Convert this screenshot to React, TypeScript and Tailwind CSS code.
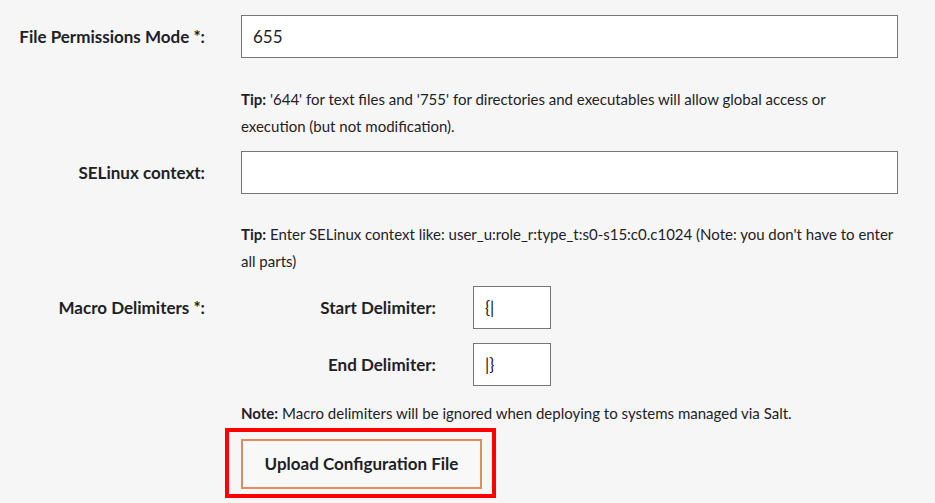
export default function App() {
  return (
    <div className="min-h-screen bg-[#f6f6f6] pt-[15px] pr-[37px] text-[#1e2125] font-['Lato','Liberation_Sans',sans-serif]">
      {/* permissions */}
      <div className="grid grid-cols-[205px_1fr] gap-x-[36px]">
        <label className="flex h-[43px] items-center justify-end text-[17px] font-bold">
          File Permissions Mode *:
        </label>
        <div>
          <input
            defaultValue="655"
            className="block h-[43px] w-full border border-[#777] bg-white px-[11px] text-[17px] outline-none"
          />
          <p className="mt-[28px] text-[15px] leading-[27px]">
            <strong>Tip:</strong> '644' for text files and '755' for directories and executables will allow global access or
            <br />
            execution (but not modification).
          </p>
        </div>
      </div>

      {/* selinux */}
      <div className="mt-[11px] grid grid-cols-[205px_1fr] gap-x-[36px]">
        <label className="flex h-[43px] items-center justify-end text-[17px] font-bold">SELinux context:</label>
        <div>
          <input className="block h-[43px] w-full border border-[#777] bg-white px-[11px] text-[17px] outline-none" />
          <p className="mt-[27px] text-[15px] leading-[27px]">
            <strong>Tip:</strong> Enter SELinux context like: user_u:role_r:type_t:s0-s15:c0.c1024 (Note: you don't have to enter all
            parts)
          </p>
        </div>
      </div>

      {/* macro delimiters */}
      <div className="mt-[11px] grid grid-cols-[205px_1fr] gap-x-[36px]">
        <label className="flex h-[43px] items-center justify-end text-[17px] font-bold">Macro Delimiters *:</label>
        <div>
          <div className="grid grid-cols-[195px_78px] gap-x-[37px] gap-y-[14px]">
            <label className="flex h-[43px] items-center justify-end text-[17px] font-bold">Start Delimiter:</label>
            <input
              defaultValue="{|"
              className="block h-[43px] w-full border border-[#777] bg-white px-[11px] text-[17px] outline-none"
            />
            <label className="flex h-[43px] items-center justify-end text-[17px] font-bold">End Delimiter:</label>
            <input
              defaultValue="|}"
              className="block h-[43px] w-full border border-[#777] bg-white px-[11px] text-[17px] outline-none"
            />
          </div>
          <p className="mt-[14px] text-[15px] leading-[27px]">
            <strong>Note:</strong> Macro delimiters will be ignored when deploying to systems managed via Salt.
          </p>
        </div>
      </div>

      <div className="ml-[225px] mt-px w-fit border-4 border-[#ff0000] pt-[7px] pb-[5px] pl-[12px] pr-[10px]">
        <button className="block h-[50px] w-[241px] border-2 border-[#e58b5a] bg-[#f8f8f8] text-[17px] font-bold">
          Upload Configuration File
        </button>
      </div>
    </div>
  );
}
